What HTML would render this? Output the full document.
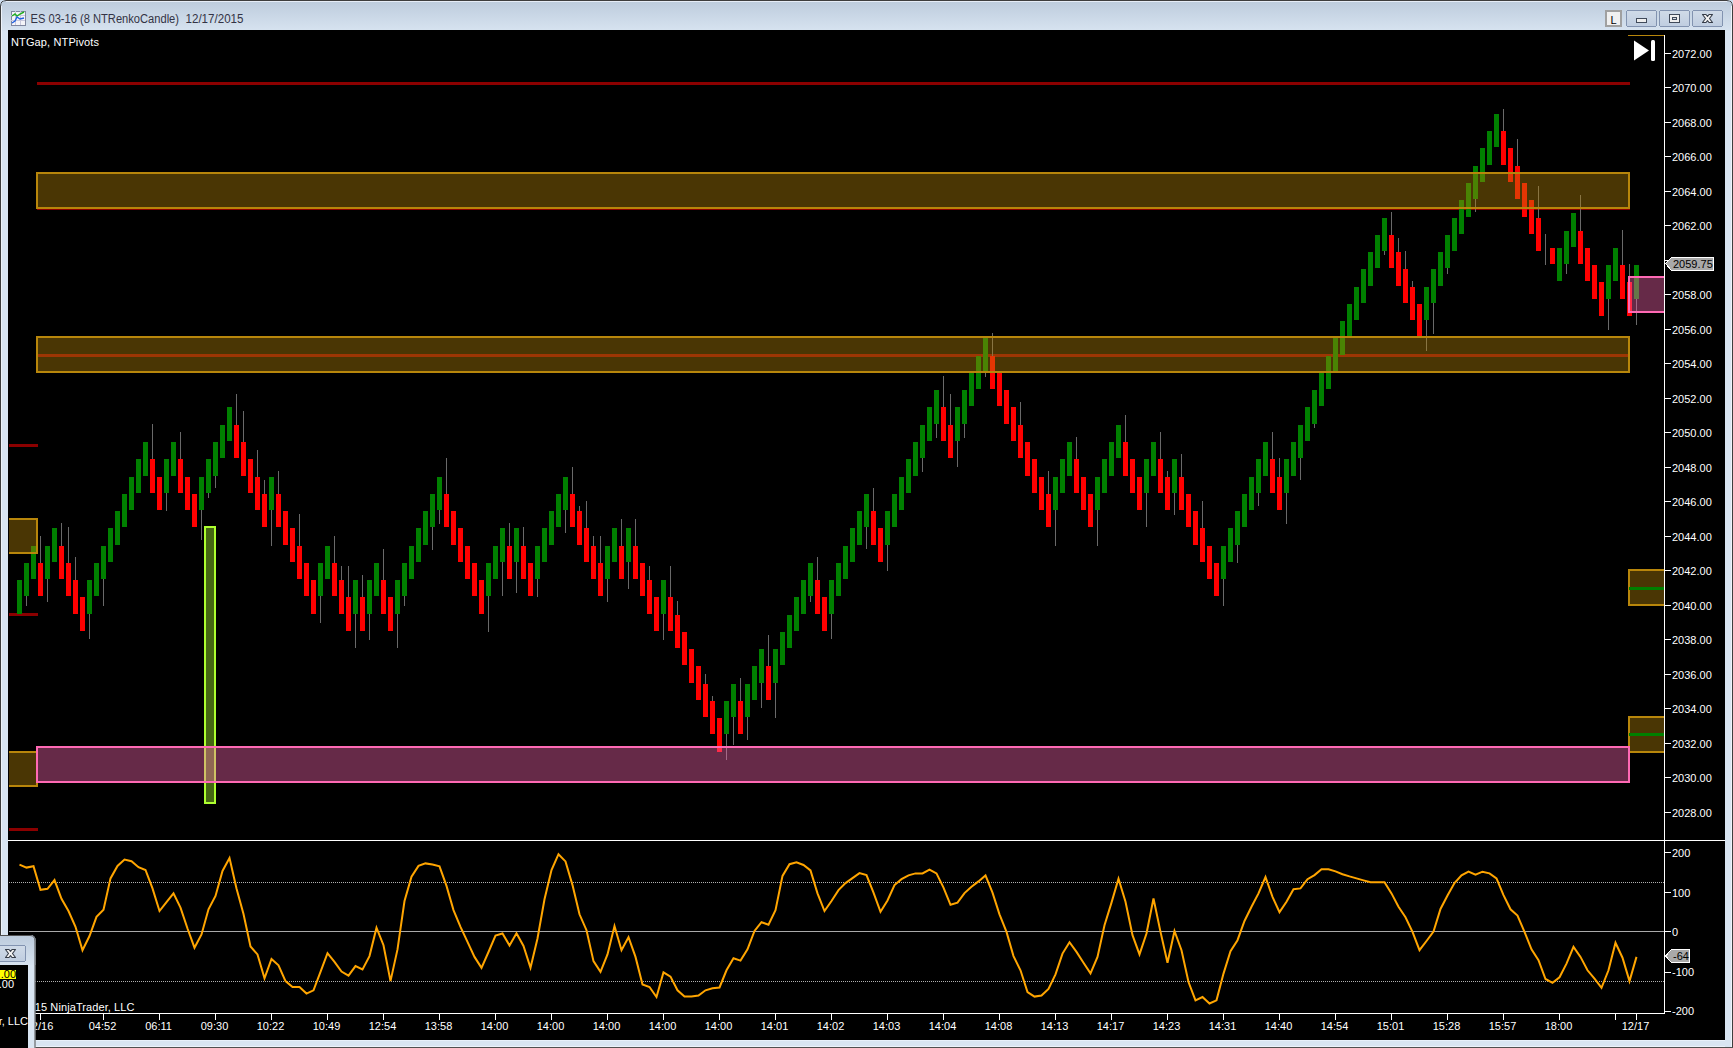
<!DOCTYPE html>
<html><head><meta charset="utf-8">
<style>
html,body{margin:0;padding:0;width:1733px;height:1048px;overflow:hidden;background:#d9e5f2;}
svg{position:absolute;left:0;top:0;}
text{font-family:"Liberation Sans",sans-serif;}
</style></head><body>
<svg width="1733" height="1048" viewBox="0 0 1733 1048" shape-rendering="crispEdges">
<defs>
<linearGradient id="tb" x1="0" y1="0" x2="0" y2="1">
<stop offset="0" stop-color="#bccbdc"/><stop offset="1" stop-color="#d7e3f0"/>
</linearGradient>
<linearGradient id="btn" x1="0" y1="0" x2="0" y2="1">
<stop offset="0" stop-color="#d0dbe8"/><stop offset="1" stop-color="#bfcde0"/>
</linearGradient>
<clipPath id="leftclip"><rect x="9" y="30" width="100" height="810"/></clipPath>
<clipPath id="chartclip"><rect x="8" y="30" width="1656" height="810"/></clipPath>
</defs>
<!-- window frame -->
<rect x="0" y="0" width="1733" height="1048" fill="#d9e5f2"/>
<rect x="0" y="0" width="1733" height="31" fill="url(#tb)"/>
<rect x="0" y="0" width="1733" height="1048" fill="#d9e5f2"/>
<rect x="0" y="0" width="1733" height="31" fill="url(#tb)"/>
<path d="M6,1.5 L1727,1.5" stroke="#e6edf7" stroke-width="1"/>
<path d="M1.5,6 L1.5,1047" stroke="#eef3fa" stroke-width="1"/>
<path d="M1731.5,6 L1731.5,1047" stroke="#eef3fa" stroke-width="1"/>
<path d="M0.5,1048 L0.5,6 Q0.5,0.5 6,0.5 L1727,0.5 Q1732.5,0.5 1732.5,6 L1732.5,1048" fill="none" stroke="#3e3e3e" stroke-width="1" shape-rendering="auto"/>
<path d="M0,0 L6,0 Q0,0 0,6 Z" fill="#cfdff0" shape-rendering="auto"/>
<path d="M1733,0 L1727,0 Q1733,0 1733,6 Z" fill="#cfdff0" shape-rendering="auto"/>
<rect x="0" y="1047" width="1733" height="1" fill="#505050"/>
<rect x="8" y="1040" width="1717" height="1" fill="#e8f0fa"/>
<rect x="8" y="1046" width="1717" height="1" fill="#eef3fb"/>
<!-- title icon -->
<rect x="11" y="11" width="14" height="14" fill="#f4f4f8" stroke="#8088a0" stroke-width="1"/>
<g stroke="#c8c8dc" stroke-width="1"><line x1="11" y1="15.5" x2="25" y2="15.5"/><line x1="11" y1="20.5" x2="25" y2="20.5"/><line x1="15.5" y1="11" x2="15.5" y2="25"/><line x1="20.5" y1="11" x2="20.5" y2="25"/></g>
<polyline points="12,16 15,14 17,16 20,14 24,12" fill="none" stroke="#20b020" stroke-width="1.4" shape-rendering="auto"/>
<polyline points="12,23 15,21 17,17 20,19 24,18" fill="none" stroke="#2060e0" stroke-width="1.4" shape-rendering="auto"/>
<text x="30.5" y="23" font-size="12" textLength="148.5" lengthAdjust="spacingAndGlyphs" fill="#333344">ES 03-16 (8 NTRenkoCandle)</text>
<text x="185.5" y="23" font-size="12" textLength="58" lengthAdjust="spacingAndGlyphs" fill="#333344">12/17/2015</text>
<!-- title buttons -->
<rect x="1606" y="11" width="15" height="15" fill="#f0f0f0" stroke="#a0a0a0" stroke-width="2"/>
<text x="1610.5" y="23.5" font-size="11" fill="#000">L</text>
<rect x="1626.5" y="10.5" width="30" height="16" rx="2" fill="url(#btn)" stroke="#8293b0"/>
<rect x="1659.5" y="10.5" width="30" height="16" rx="2" fill="url(#btn)" stroke="#8293b0"/>
<rect x="1692.5" y="10.5" width="30" height="16" rx="2" fill="url(#btn)" stroke="#8293b0"/>
<rect x="1636.5" y="18.5" width="10" height="4" rx="1" fill="#eeeeee" stroke="#404a5a"/>
<rect x="1669.5" y="14.5" width="10" height="8" rx="1" fill="#eeeeee" stroke="#404a5a"/>
<rect x="1672.5" y="17.5" width="4" height="2" fill="#d8dce4" stroke="#404a5a" stroke-width="1"/>
<path d="M1702.5,14.5 L1706,14.5 L1707.5,16.3 L1709,14.5 L1712.5,14.5 L1709.5,18.5 L1712.5,22.5 L1709,22.5 L1707.5,20.7 L1706,22.5 L1702.5,22.5 L1705.5,18.5 Z" fill="#f2f2f2" stroke="#353c48" stroke-width="1.1" stroke-linejoin="round" shape-rendering="auto"/>

<!-- chart background -->
<rect x="8" y="30" width="1717" height="1010" fill="#000"/>

<!-- pivot lines (under bands) -->
<rect x="37" y="82" width="1593" height="3" fill="#8b0000"/>
<rect x="37" y="207" width="1593" height="3" fill="#8b0000"/>
<rect x="37" y="354" width="1593" height="3" fill="#8b0000"/>
<rect x="9" y="444" width="29" height="3" fill="#8b0000"/>
<rect x="9" y="613" width="29" height="3" fill="#8b0000"/>
<rect x="9" y="828" width="29" height="3" fill="#8b0000"/>

<!-- candles -->
<rect x="17" y="580" width="5" height="34" fill="#008000"/>
<rect x="26" y="596" width="1" height="9.7" fill="#696969"/>
<rect x="24" y="563" width="5" height="33" fill="#008000"/>
<rect x="31" y="546" width="5" height="33" fill="#008000"/>
<rect x="40" y="536.0" width="1" height="27.0" fill="#696969"/>
<rect x="38" y="563" width="5" height="33" fill="#ff0000"/>
<rect x="47" y="579" width="1" height="22.7" fill="#696969"/>
<rect x="45" y="546" width="5" height="33" fill="#008000"/>
<rect x="52" y="528" width="5" height="34" fill="#008000"/>
<rect x="61" y="523.0" width="1" height="23.0" fill="#696969"/>
<rect x="59" y="546" width="5" height="33" fill="#ff0000"/>
<rect x="68" y="527.0" width="1" height="36.0" fill="#696969"/>
<rect x="66" y="563" width="5" height="33" fill="#ff0000"/>
<rect x="75" y="556.8" width="1" height="23.2" fill="#696969"/>
<rect x="73" y="580" width="5" height="34" fill="#ff0000"/>
<rect x="80" y="597" width="5" height="34" fill="#ff0000"/>
<rect x="89" y="614" width="1" height="25.0" fill="#696969"/>
<rect x="87" y="580" width="5" height="34" fill="#008000"/>
<rect x="94" y="563" width="5" height="33" fill="#008000"/>
<rect x="103" y="579" width="1" height="26.7" fill="#696969"/>
<rect x="101" y="546" width="5" height="33" fill="#008000"/>
<rect x="108" y="528" width="5" height="34" fill="#008000"/>
<rect x="115" y="511" width="5" height="34" fill="#008000"/>
<rect x="122" y="494" width="5" height="33" fill="#008000"/>
<rect x="129" y="477" width="5" height="33" fill="#008000"/>
<rect x="136" y="459" width="5" height="34" fill="#008000"/>
<rect x="143" y="442" width="5" height="34" fill="#008000"/>
<rect x="152" y="424.0" width="1" height="35.0" fill="#696969"/>
<rect x="150" y="459" width="5" height="34" fill="#ff0000"/>
<rect x="157" y="477" width="5" height="33" fill="#ff0000"/>
<rect x="166" y="493" width="1" height="18.0" fill="#696969"/>
<rect x="164" y="459" width="5" height="34" fill="#008000"/>
<rect x="171" y="442" width="5" height="34" fill="#008000"/>
<rect x="180" y="432.0" width="1" height="27.0" fill="#696969"/>
<rect x="178" y="459" width="5" height="34" fill="#ff0000"/>
<rect x="185" y="477" width="5" height="33" fill="#ff0000"/>
<rect x="192" y="494" width="5" height="33" fill="#ff0000"/>
<rect x="201" y="510" width="1" height="30.0" fill="#696969"/>
<rect x="199" y="477" width="5" height="33" fill="#008000"/>
<rect x="208" y="493" width="1" height="4.5" fill="#696969"/>
<rect x="206" y="459" width="5" height="34" fill="#008000"/>
<rect x="215" y="476" width="1" height="12.0" fill="#696969"/>
<rect x="213" y="442" width="5" height="34" fill="#008000"/>
<rect x="220" y="425" width="5" height="33" fill="#008000"/>
<rect x="227" y="407" width="5" height="34" fill="#008000"/>
<rect x="236" y="394.0" width="1" height="31.0" fill="#696969"/>
<rect x="234" y="425" width="5" height="33" fill="#ff0000"/>
<rect x="243" y="410.7" width="1" height="31.3" fill="#696969"/>
<rect x="241" y="442" width="5" height="34" fill="#ff0000"/>
<rect x="248" y="459" width="5" height="34" fill="#ff0000"/>
<rect x="257" y="450.0" width="1" height="27.0" fill="#696969"/>
<rect x="255" y="477" width="5" height="33" fill="#ff0000"/>
<rect x="264" y="480.0" width="1" height="14.0" fill="#696969"/>
<rect x="262" y="494" width="5" height="33" fill="#ff0000"/>
<rect x="271" y="510" width="1" height="35.6" fill="#696969"/>
<rect x="269" y="477" width="5" height="33" fill="#008000"/>
<rect x="278" y="470.8" width="1" height="23.2" fill="#696969"/>
<rect x="276" y="494" width="5" height="33" fill="#ff0000"/>
<rect x="283" y="511" width="5" height="34" fill="#ff0000"/>
<rect x="290" y="528" width="5" height="34" fill="#ff0000"/>
<rect x="299" y="514.0" width="1" height="32.0" fill="#696969"/>
<rect x="297" y="546" width="5" height="33" fill="#ff0000"/>
<rect x="304" y="563" width="5" height="33" fill="#ff0000"/>
<rect x="311" y="580" width="5" height="34" fill="#ff0000"/>
<rect x="320" y="596" width="1" height="26.5" fill="#696969"/>
<rect x="318" y="563" width="5" height="33" fill="#008000"/>
<rect x="325" y="546" width="5" height="33" fill="#008000"/>
<rect x="334" y="535.7" width="1" height="27.3" fill="#696969"/>
<rect x="332" y="563" width="5" height="33" fill="#ff0000"/>
<rect x="341" y="565.6" width="1" height="14.4" fill="#696969"/>
<rect x="339" y="580" width="5" height="34" fill="#ff0000"/>
<rect x="348" y="566.0" width="1" height="31.0" fill="#696969"/>
<rect x="346" y="597" width="5" height="34" fill="#ff0000"/>
<rect x="355" y="614" width="1" height="34.4" fill="#696969"/>
<rect x="353" y="580" width="5" height="34" fill="#008000"/>
<rect x="362" y="575.0" width="1" height="22.0" fill="#696969"/>
<rect x="360" y="597" width="5" height="34" fill="#ff0000"/>
<rect x="369" y="614" width="1" height="25.5" fill="#696969"/>
<rect x="367" y="580" width="5" height="34" fill="#008000"/>
<rect x="374" y="563" width="5" height="33" fill="#008000"/>
<rect x="383" y="549.0" width="1" height="31.0" fill="#696969"/>
<rect x="381" y="580" width="5" height="34" fill="#ff0000"/>
<rect x="388" y="597" width="5" height="34" fill="#ff0000"/>
<rect x="397" y="614" width="1" height="34.4" fill="#696969"/>
<rect x="395" y="580" width="5" height="34" fill="#008000"/>
<rect x="404" y="596" width="1" height="9.6" fill="#696969"/>
<rect x="402" y="563" width="5" height="33" fill="#008000"/>
<rect x="409" y="546" width="5" height="33" fill="#008000"/>
<rect x="416" y="528" width="5" height="34" fill="#008000"/>
<rect x="423" y="511" width="5" height="34" fill="#008000"/>
<rect x="432" y="527" width="1" height="22.5" fill="#696969"/>
<rect x="430" y="494" width="5" height="33" fill="#008000"/>
<rect x="439" y="510" width="1" height="13.6" fill="#696969"/>
<rect x="437" y="477" width="5" height="33" fill="#008000"/>
<rect x="446" y="458.2" width="1" height="35.8" fill="#696969"/>
<rect x="444" y="494" width="5" height="33" fill="#ff0000"/>
<rect x="451" y="511" width="5" height="34" fill="#ff0000"/>
<rect x="458" y="528" width="5" height="34" fill="#ff0000"/>
<rect x="465" y="546" width="5" height="33" fill="#ff0000"/>
<rect x="472" y="563" width="5" height="33" fill="#ff0000"/>
<rect x="479" y="580" width="5" height="34" fill="#ff0000"/>
<rect x="488" y="596" width="1" height="35.5" fill="#696969"/>
<rect x="486" y="563" width="5" height="33" fill="#008000"/>
<rect x="493" y="546" width="5" height="33" fill="#008000"/>
<rect x="502" y="562" width="1" height="34.3" fill="#696969"/>
<rect x="500" y="528" width="5" height="34" fill="#008000"/>
<rect x="509" y="522.8" width="1" height="23.2" fill="#696969"/>
<rect x="507" y="546" width="5" height="33" fill="#ff0000"/>
<rect x="516" y="562" width="1" height="30.5" fill="#696969"/>
<rect x="514" y="528" width="5" height="34" fill="#008000"/>
<rect x="523" y="526.8" width="1" height="19.2" fill="#696969"/>
<rect x="521" y="546" width="5" height="33" fill="#ff0000"/>
<rect x="528" y="563" width="5" height="33" fill="#ff0000"/>
<rect x="537" y="579" width="1" height="18.0" fill="#696969"/>
<rect x="535" y="546" width="5" height="33" fill="#008000"/>
<rect x="542" y="528" width="5" height="34" fill="#008000"/>
<rect x="549" y="511" width="5" height="34" fill="#008000"/>
<rect x="556" y="494" width="5" height="33" fill="#008000"/>
<rect x="565" y="510" width="1" height="23.0" fill="#696969"/>
<rect x="563" y="477" width="5" height="33" fill="#008000"/>
<rect x="572" y="466.7" width="1" height="27.3" fill="#696969"/>
<rect x="570" y="494" width="5" height="33" fill="#ff0000"/>
<rect x="579" y="506.0" width="1" height="5.0" fill="#696969"/>
<rect x="577" y="511" width="5" height="34" fill="#ff0000"/>
<rect x="586" y="501.0" width="1" height="27.0" fill="#696969"/>
<rect x="584" y="528" width="5" height="34" fill="#ff0000"/>
<rect x="593" y="535.6" width="1" height="10.4" fill="#696969"/>
<rect x="591" y="546" width="5" height="33" fill="#ff0000"/>
<rect x="600" y="535.6" width="1" height="27.4" fill="#696969"/>
<rect x="598" y="563" width="5" height="33" fill="#ff0000"/>
<rect x="607" y="579" width="1" height="22.6" fill="#696969"/>
<rect x="605" y="546" width="5" height="33" fill="#008000"/>
<rect x="612" y="528" width="5" height="34" fill="#008000"/>
<rect x="621" y="518.8" width="1" height="27.2" fill="#696969"/>
<rect x="619" y="546" width="5" height="33" fill="#ff0000"/>
<rect x="628" y="562" width="1" height="27.0" fill="#696969"/>
<rect x="626" y="528" width="5" height="34" fill="#008000"/>
<rect x="635" y="518.8" width="1" height="27.2" fill="#696969"/>
<rect x="633" y="546" width="5" height="33" fill="#ff0000"/>
<rect x="640" y="563" width="5" height="33" fill="#ff0000"/>
<rect x="649" y="566.0" width="1" height="14.0" fill="#696969"/>
<rect x="647" y="580" width="5" height="34" fill="#ff0000"/>
<rect x="654" y="597" width="5" height="34" fill="#ff0000"/>
<rect x="663" y="614" width="1" height="25.8" fill="#696969"/>
<rect x="661" y="580" width="5" height="34" fill="#008000"/>
<rect x="670" y="566.0" width="1" height="31.0" fill="#696969"/>
<rect x="668" y="597" width="5" height="34" fill="#ff0000"/>
<rect x="677" y="601.0" width="1" height="14.0" fill="#696969"/>
<rect x="675" y="615" width="5" height="33" fill="#ff0000"/>
<rect x="682" y="632" width="5" height="33" fill="#ff0000"/>
<rect x="689" y="649" width="5" height="34" fill="#ff0000"/>
<rect x="696" y="666" width="5" height="34" fill="#ff0000"/>
<rect x="705" y="673.6" width="1" height="10.4" fill="#696969"/>
<rect x="703" y="684" width="5" height="33" fill="#ff0000"/>
<rect x="712" y="695.8" width="1" height="5.2" fill="#696969"/>
<rect x="710" y="701" width="5" height="33" fill="#ff0000"/>
<rect x="717" y="718" width="5" height="34" fill="#ff0000"/>
<rect x="726" y="734" width="1" height="26.4" fill="#696969"/>
<rect x="724" y="701" width="5" height="33" fill="#008000"/>
<rect x="733" y="717" width="1" height="28.0" fill="#696969"/>
<rect x="731" y="684" width="5" height="33" fill="#008000"/>
<rect x="740" y="677.6" width="1" height="23.4" fill="#696969"/>
<rect x="738" y="701" width="5" height="33" fill="#ff0000"/>
<rect x="747" y="717" width="1" height="22.6" fill="#696969"/>
<rect x="745" y="684" width="5" height="33" fill="#008000"/>
<rect x="752" y="666" width="5" height="34" fill="#008000"/>
<rect x="761" y="683" width="1" height="25.3" fill="#696969"/>
<rect x="759" y="649" width="5" height="34" fill="#008000"/>
<rect x="768" y="634.9" width="1" height="31.1" fill="#696969"/>
<rect x="766" y="666" width="5" height="34" fill="#ff0000"/>
<rect x="775" y="683" width="1" height="34.7" fill="#696969"/>
<rect x="773" y="649" width="5" height="34" fill="#008000"/>
<rect x="780" y="632" width="5" height="33" fill="#008000"/>
<rect x="787" y="615" width="5" height="33" fill="#008000"/>
<rect x="794" y="597" width="5" height="34" fill="#008000"/>
<rect x="801" y="580" width="5" height="34" fill="#008000"/>
<rect x="810" y="596" width="1" height="5.5" fill="#696969"/>
<rect x="808" y="563" width="5" height="33" fill="#008000"/>
<rect x="817" y="556.9" width="1" height="23.1" fill="#696969"/>
<rect x="815" y="580" width="5" height="34" fill="#ff0000"/>
<rect x="822" y="597" width="5" height="34" fill="#ff0000"/>
<rect x="831" y="614" width="1" height="25.4" fill="#696969"/>
<rect x="829" y="580" width="5" height="34" fill="#008000"/>
<rect x="836" y="563" width="5" height="33" fill="#008000"/>
<rect x="843" y="546" width="5" height="33" fill="#008000"/>
<rect x="850" y="528" width="5" height="34" fill="#008000"/>
<rect x="857" y="511" width="5" height="34" fill="#008000"/>
<rect x="866" y="527" width="1" height="22.0" fill="#696969"/>
<rect x="864" y="494" width="5" height="33" fill="#008000"/>
<rect x="873" y="487.7" width="1" height="23.3" fill="#696969"/>
<rect x="871" y="511" width="5" height="34" fill="#ff0000"/>
<rect x="878" y="528" width="5" height="34" fill="#ff0000"/>
<rect x="887" y="545" width="1" height="25.5" fill="#696969"/>
<rect x="885" y="511" width="5" height="34" fill="#008000"/>
<rect x="892" y="494" width="5" height="33" fill="#008000"/>
<rect x="899" y="477" width="5" height="33" fill="#008000"/>
<rect x="906" y="459" width="5" height="34" fill="#008000"/>
<rect x="913" y="442" width="5" height="34" fill="#008000"/>
<rect x="922" y="458" width="1" height="13.7" fill="#696969"/>
<rect x="920" y="425" width="5" height="33" fill="#008000"/>
<rect x="927" y="407" width="5" height="34" fill="#008000"/>
<rect x="936" y="424" width="1" height="13.5" fill="#696969"/>
<rect x="934" y="390" width="5" height="34" fill="#008000"/>
<rect x="943" y="376.1" width="1" height="30.9" fill="#696969"/>
<rect x="941" y="407" width="5" height="34" fill="#ff0000"/>
<rect x="950" y="394.3" width="1" height="30.7" fill="#696969"/>
<rect x="948" y="425" width="5" height="33" fill="#ff0000"/>
<rect x="957" y="441" width="1" height="26.4" fill="#696969"/>
<rect x="955" y="407" width="5" height="34" fill="#008000"/>
<rect x="964" y="424" width="1" height="13.5" fill="#696969"/>
<rect x="962" y="390" width="5" height="34" fill="#008000"/>
<rect x="969" y="373" width="5" height="33" fill="#008000"/>
<rect x="976" y="356" width="5" height="33" fill="#008000"/>
<rect x="985" y="372" width="1" height="4.6" fill="#696969"/>
<rect x="983" y="338" width="5" height="34" fill="#008000"/>
<rect x="992" y="332.8" width="1" height="23.2" fill="#696969"/>
<rect x="990" y="356" width="5" height="33" fill="#ff0000"/>
<rect x="997" y="373" width="5" height="33" fill="#ff0000"/>
<rect x="1004" y="390" width="5" height="34" fill="#ff0000"/>
<rect x="1011" y="407" width="5" height="34" fill="#ff0000"/>
<rect x="1020" y="402.2" width="1" height="22.8" fill="#696969"/>
<rect x="1018" y="425" width="5" height="33" fill="#ff0000"/>
<rect x="1025" y="442" width="5" height="34" fill="#ff0000"/>
<rect x="1032" y="459" width="5" height="34" fill="#ff0000"/>
<rect x="1039" y="477" width="5" height="33" fill="#ff0000"/>
<rect x="1048" y="470.8" width="1" height="23.2" fill="#696969"/>
<rect x="1046" y="494" width="5" height="33" fill="#ff0000"/>
<rect x="1055" y="510" width="1" height="35.6" fill="#696969"/>
<rect x="1053" y="477" width="5" height="33" fill="#008000"/>
<rect x="1060" y="459" width="5" height="34" fill="#008000"/>
<rect x="1067" y="442" width="5" height="34" fill="#008000"/>
<rect x="1076" y="436.9" width="1" height="22.1" fill="#696969"/>
<rect x="1074" y="459" width="5" height="34" fill="#ff0000"/>
<rect x="1081" y="477" width="5" height="33" fill="#ff0000"/>
<rect x="1088" y="494" width="5" height="33" fill="#ff0000"/>
<rect x="1097" y="510" width="1" height="35.6" fill="#696969"/>
<rect x="1095" y="477" width="5" height="33" fill="#008000"/>
<rect x="1102" y="459" width="5" height="34" fill="#008000"/>
<rect x="1109" y="442" width="5" height="34" fill="#008000"/>
<rect x="1116" y="425" width="5" height="33" fill="#008000"/>
<rect x="1125" y="414.7" width="1" height="27.3" fill="#696969"/>
<rect x="1123" y="442" width="5" height="34" fill="#ff0000"/>
<rect x="1130" y="459" width="5" height="34" fill="#ff0000"/>
<rect x="1137" y="477" width="5" height="33" fill="#ff0000"/>
<rect x="1146" y="493" width="1" height="34.4" fill="#696969"/>
<rect x="1144" y="459" width="5" height="34" fill="#008000"/>
<rect x="1151" y="442" width="5" height="34" fill="#008000"/>
<rect x="1160" y="432.0" width="1" height="27.0" fill="#696969"/>
<rect x="1158" y="459" width="5" height="34" fill="#ff0000"/>
<rect x="1167" y="470.8" width="1" height="6.2" fill="#696969"/>
<rect x="1165" y="477" width="5" height="33" fill="#ff0000"/>
<rect x="1174" y="493" width="1" height="21.9" fill="#696969"/>
<rect x="1172" y="459" width="5" height="34" fill="#008000"/>
<rect x="1181" y="454.3" width="1" height="22.7" fill="#696969"/>
<rect x="1179" y="477" width="5" height="33" fill="#ff0000"/>
<rect x="1186" y="494" width="5" height="33" fill="#ff0000"/>
<rect x="1193" y="511" width="5" height="34" fill="#ff0000"/>
<rect x="1202" y="501.1" width="1" height="26.9" fill="#696969"/>
<rect x="1200" y="528" width="5" height="34" fill="#ff0000"/>
<rect x="1207" y="546" width="5" height="33" fill="#ff0000"/>
<rect x="1214" y="563" width="5" height="33" fill="#ff0000"/>
<rect x="1223" y="579" width="1" height="26.8" fill="#696969"/>
<rect x="1221" y="546" width="5" height="33" fill="#008000"/>
<rect x="1228" y="528" width="5" height="34" fill="#008000"/>
<rect x="1237" y="545" width="1" height="17.5" fill="#696969"/>
<rect x="1235" y="511" width="5" height="34" fill="#008000"/>
<rect x="1242" y="494" width="5" height="33" fill="#008000"/>
<rect x="1249" y="477" width="5" height="33" fill="#008000"/>
<rect x="1258" y="493" width="1" height="13.4" fill="#696969"/>
<rect x="1256" y="459" width="5" height="34" fill="#008000"/>
<rect x="1263" y="442" width="5" height="34" fill="#008000"/>
<rect x="1272" y="432.2" width="1" height="26.8" fill="#696969"/>
<rect x="1270" y="459" width="5" height="34" fill="#ff0000"/>
<rect x="1279" y="458.4" width="1" height="18.6" fill="#696969"/>
<rect x="1277" y="477" width="5" height="33" fill="#ff0000"/>
<rect x="1286" y="493" width="1" height="30.8" fill="#696969"/>
<rect x="1284" y="459" width="5" height="34" fill="#008000"/>
<rect x="1291" y="442" width="5" height="34" fill="#008000"/>
<rect x="1300" y="458" width="1" height="22.3" fill="#696969"/>
<rect x="1298" y="425" width="5" height="33" fill="#008000"/>
<rect x="1305" y="407" width="5" height="34" fill="#008000"/>
<rect x="1314" y="424" width="1" height="4.2" fill="#696969"/>
<rect x="1312" y="390" width="5" height="34" fill="#008000"/>
<rect x="1319" y="373" width="5" height="33" fill="#008000"/>
<rect x="1326" y="356" width="5" height="33" fill="#008000"/>
<rect x="1333" y="338" width="5" height="34" fill="#008000"/>
<rect x="1340" y="321" width="5" height="34" fill="#008000"/>
<rect x="1347" y="304" width="5" height="33" fill="#008000"/>
<rect x="1354" y="287" width="5" height="33" fill="#008000"/>
<rect x="1361" y="269" width="5" height="34" fill="#008000"/>
<rect x="1368" y="252" width="5" height="34" fill="#008000"/>
<rect x="1375" y="235" width="5" height="33" fill="#008000"/>
<rect x="1384" y="251" width="1" height="3.9" fill="#696969"/>
<rect x="1382" y="218" width="5" height="33" fill="#008000"/>
<rect x="1391" y="212.2" width="1" height="22.8" fill="#696969"/>
<rect x="1389" y="235" width="5" height="33" fill="#ff0000"/>
<rect x="1398" y="238.4" width="1" height="13.6" fill="#696969"/>
<rect x="1396" y="252" width="5" height="34" fill="#ff0000"/>
<rect x="1405" y="251.0" width="1" height="18.0" fill="#696969"/>
<rect x="1403" y="269" width="5" height="34" fill="#ff0000"/>
<rect x="1412" y="281.0" width="1" height="6.0" fill="#696969"/>
<rect x="1410" y="287" width="5" height="33" fill="#ff0000"/>
<rect x="1417" y="304" width="5" height="33" fill="#ff0000"/>
<rect x="1426" y="320" width="1" height="31.0" fill="#696969"/>
<rect x="1424" y="287" width="5" height="33" fill="#008000"/>
<rect x="1433" y="303" width="1" height="30.7" fill="#696969"/>
<rect x="1431" y="269" width="5" height="34" fill="#008000"/>
<rect x="1438" y="252" width="5" height="34" fill="#008000"/>
<rect x="1447" y="268" width="1" height="5.6" fill="#696969"/>
<rect x="1445" y="235" width="5" height="33" fill="#008000"/>
<rect x="1452" y="218" width="5" height="33" fill="#008000"/>
<rect x="1459" y="200" width="5" height="34" fill="#008000"/>
<rect x="1466" y="183" width="5" height="34" fill="#008000"/>
<rect x="1475" y="199" width="1" height="13.2" fill="#696969"/>
<rect x="1473" y="166" width="5" height="33" fill="#008000"/>
<rect x="1480" y="148" width="5" height="34" fill="#008000"/>
<rect x="1487" y="131" width="5" height="34" fill="#008000"/>
<rect x="1494" y="114" width="5" height="33" fill="#008000"/>
<rect x="1503" y="109.3" width="1" height="21.7" fill="#696969"/>
<rect x="1501" y="131" width="5" height="34" fill="#ff0000"/>
<rect x="1508" y="148" width="5" height="34" fill="#ff0000"/>
<rect x="1517" y="139.3" width="1" height="26.7" fill="#696969"/>
<rect x="1515" y="166" width="5" height="33" fill="#ff0000"/>
<rect x="1522" y="183" width="5" height="34" fill="#ff0000"/>
<rect x="1529" y="200" width="5" height="34" fill="#ff0000"/>
<rect x="1538" y="185.8" width="1" height="32.2" fill="#696969"/>
<rect x="1536" y="218" width="5" height="33" fill="#ff0000"/>
<rect x="1550" y="248" width="5" height="16" fill="#ff0000"/>
<rect x="1557" y="248" width="5" height="33" fill="#008000"/>
<rect x="1566" y="264" width="1" height="9.7" fill="#696969"/>
<rect x="1564" y="231" width="5" height="33" fill="#008000"/>
<rect x="1571" y="213" width="5" height="34" fill="#008000"/>
<rect x="1580" y="195.3" width="1" height="35.7" fill="#696969"/>
<rect x="1578" y="231" width="5" height="33" fill="#ff0000"/>
<rect x="1585" y="248" width="5" height="33" fill="#ff0000"/>
<rect x="1592" y="265" width="5" height="34" fill="#ff0000"/>
<rect x="1599" y="282" width="5" height="34" fill="#ff0000"/>
<rect x="1608" y="299" width="1" height="30.5" fill="#696969"/>
<rect x="1606" y="265" width="5" height="34" fill="#008000"/>
<rect x="1613" y="248" width="5" height="33" fill="#008000"/>
<rect x="1622" y="230.2" width="1" height="34.8" fill="#696969"/>
<rect x="1620" y="265" width="5" height="34" fill="#ff0000"/>
<rect x="1629" y="264.0" width="1" height="18.0" fill="#696969"/>
<rect x="1627" y="282" width="5" height="34" fill="#ff0000"/>
<rect x="1636" y="299" width="1" height="25.5" fill="#696969"/>
<rect x="1634" y="265" width="5" height="34" fill="#008000"/>
<rect x="1545" y="234" width="1" height="31" fill="#696969"/>

<!-- gap boxes -->
<g clip-path="url(#chartclip)">
<rect x="37" y="173" width="1592" height="35" fill="rgba(184,134,11,0.4)" stroke="#b8860b" stroke-width="2"/>
<rect x="37" y="337" width="1592" height="35" fill="rgba(184,134,11,0.4)" stroke="#b8860b" stroke-width="2"/>
<g clip-path="url(#leftclip)"><rect x="-10" y="519" width="47" height="34" fill="rgba(184,134,11,0.4)" stroke="#b8860b" stroke-width="2"/>
<rect x="-10" y="752" width="47" height="34" fill="rgba(184,134,11,0.4)" stroke="#b8860b" stroke-width="2"/></g>
<rect x="1629" y="570" width="60" height="35" fill="rgba(184,134,11,0.4)" stroke="#b8860b" stroke-width="2"/>
<rect x="1629" y="717" width="60" height="35" fill="rgba(184,134,11,0.4)" stroke="#b8860b" stroke-width="2"/>
<rect x="1629" y="587" width="35" height="3" fill="#008000"/>
<rect x="1629" y="733" width="35" height="3" fill="#008000"/>
<rect x="205" y="527" width="10" height="276" fill="rgba(173,255,47,0.4)" stroke="#adff2f" stroke-width="2"/>
<rect x="37" y="747" width="1592" height="35" fill="rgba(255,105,180,0.4)" stroke="#ff69b4" stroke-width="2"/>
<rect x="1629" y="277" width="60" height="35" fill="rgba(255,105,180,0.4)" stroke="#ff69b4" stroke-width="2"/>
</g>

<!-- axes -->
<rect x="1628" y="35" width="37" height="1" fill="#b8860b"/>
<rect x="1664" y="35" width="1" height="978" fill="#ffffff"/>
<rect x="8" y="840" width="1717" height="1" fill="#ffffff"/>
<rect x="8" y="1013" width="1657" height="1" fill="#ffffff"/>
<!-- play icon -->
<path d="M1634,40.5 L1649,50.5 L1634,60.5 Z" fill="#ffffff" shape-rendering="auto"/>
<rect x="1651" y="40" width="4" height="21" rx="1.5" fill="#ffffff" shape-rendering="auto"/>

<g font-size="11" fill="#ffffff">
<rect x="1664" y="53" width="7" height="1" fill="#fff"/>
<text x="1672" y="58">2072.00</text>
<rect x="1664" y="87" width="7" height="1" fill="#fff"/>
<text x="1672" y="92">2070.00</text>
<rect x="1664" y="122" width="7" height="1" fill="#fff"/>
<text x="1672" y="127">2068.00</text>
<rect x="1664" y="156" width="7" height="1" fill="#fff"/>
<text x="1672" y="161">2066.00</text>
<rect x="1664" y="191" width="7" height="1" fill="#fff"/>
<text x="1672" y="196">2064.00</text>
<rect x="1664" y="225" width="7" height="1" fill="#fff"/>
<text x="1672" y="230">2062.00</text>
<rect x="1664" y="260" width="7" height="1" fill="#fff"/>
<text x="1672" y="265">2060.00</text>
<rect x="1664" y="294" width="7" height="1" fill="#fff"/>
<text x="1672" y="299">2058.00</text>
<rect x="1664" y="329" width="7" height="1" fill="#fff"/>
<text x="1672" y="334">2056.00</text>
<rect x="1664" y="363" width="7" height="1" fill="#fff"/>
<text x="1672" y="368">2054.00</text>
<rect x="1664" y="398" width="7" height="1" fill="#fff"/>
<text x="1672" y="403">2052.00</text>
<rect x="1664" y="432" width="7" height="1" fill="#fff"/>
<text x="1672" y="437">2050.00</text>
<rect x="1664" y="467" width="7" height="1" fill="#fff"/>
<text x="1672" y="472">2048.00</text>
<rect x="1664" y="501" width="7" height="1" fill="#fff"/>
<text x="1672" y="506">2046.00</text>
<rect x="1664" y="536" width="7" height="1" fill="#fff"/>
<text x="1672" y="541">2044.00</text>
<rect x="1664" y="570" width="7" height="1" fill="#fff"/>
<text x="1672" y="575">2042.00</text>
<rect x="1664" y="605" width="7" height="1" fill="#fff"/>
<text x="1672" y="610">2040.00</text>
<rect x="1664" y="639" width="7" height="1" fill="#fff"/>
<text x="1672" y="644">2038.00</text>
<rect x="1664" y="674" width="7" height="1" fill="#fff"/>
<text x="1672" y="679">2036.00</text>
<rect x="1664" y="708" width="7" height="1" fill="#fff"/>
<text x="1672" y="713">2034.00</text>
<rect x="1664" y="743" width="7" height="1" fill="#fff"/>
<text x="1672" y="748">2032.00</text>
<rect x="1664" y="777" width="7" height="1" fill="#fff"/>
<text x="1672" y="782">2030.00</text>
<rect x="1664" y="812" width="7" height="1" fill="#fff"/>
<text x="1672" y="817">2028.00</text>
<rect x="1664" y="852.0" width="7" height="1" fill="#fff"/>
<text x="1672" y="856.5">200</text>
<rect x="1664" y="891.9" width="7" height="1" fill="#fff"/>
<text x="1672" y="897.0">100</text>
<rect x="1664" y="931.0" width="7" height="1" fill="#fff"/>
<text x="1672" y="935.5">0</text>
<rect x="1664" y="971.5" width="7" height="1" fill="#fff"/>
<text x="1672" y="976.0">-100</text>
<rect x="1664" y="1011.0" width="7" height="1" fill="#fff"/>
<text x="1672" y="1015.0">-200</text>
<rect x="40.0" y="1013" width="1" height="7" fill="#fff"/>
<text x="39.5" y="1030" text-anchor="middle">12/16</text>
<rect x="103.0" y="1013" width="1" height="7" fill="#fff"/>
<text x="102.5" y="1030" text-anchor="middle">04:52</text>
<rect x="159.0" y="1013" width="1" height="7" fill="#fff"/>
<text x="158.5" y="1030" text-anchor="middle">06:11</text>
<rect x="215.0" y="1013" width="1" height="7" fill="#fff"/>
<text x="214.5" y="1030" text-anchor="middle">09:30</text>
<rect x="271.0" y="1013" width="1" height="7" fill="#fff"/>
<text x="270.5" y="1030" text-anchor="middle">10:22</text>
<rect x="327.0" y="1013" width="1" height="7" fill="#fff"/>
<text x="326.5" y="1030" text-anchor="middle">10:49</text>
<rect x="383.0" y="1013" width="1" height="7" fill="#fff"/>
<text x="382.5" y="1030" text-anchor="middle">12:54</text>
<rect x="439.0" y="1013" width="1" height="7" fill="#fff"/>
<text x="438.5" y="1030" text-anchor="middle">13:58</text>
<rect x="495.0" y="1013" width="1" height="7" fill="#fff"/>
<text x="494.5" y="1030" text-anchor="middle">14:00</text>
<rect x="551.0" y="1013" width="1" height="7" fill="#fff"/>
<text x="550.5" y="1030" text-anchor="middle">14:00</text>
<rect x="607.0" y="1013" width="1" height="7" fill="#fff"/>
<text x="606.5" y="1030" text-anchor="middle">14:00</text>
<rect x="663.0" y="1013" width="1" height="7" fill="#fff"/>
<text x="662.5" y="1030" text-anchor="middle">14:00</text>
<rect x="719.0" y="1013" width="1" height="7" fill="#fff"/>
<text x="718.5" y="1030" text-anchor="middle">14:00</text>
<rect x="775.0" y="1013" width="1" height="7" fill="#fff"/>
<text x="774.5" y="1030" text-anchor="middle">14:01</text>
<rect x="831.0" y="1013" width="1" height="7" fill="#fff"/>
<text x="830.5" y="1030" text-anchor="middle">14:02</text>
<rect x="887.0" y="1013" width="1" height="7" fill="#fff"/>
<text x="886.5" y="1030" text-anchor="middle">14:03</text>
<rect x="943.0" y="1013" width="1" height="7" fill="#fff"/>
<text x="942.5" y="1030" text-anchor="middle">14:04</text>
<rect x="999.0" y="1013" width="1" height="7" fill="#fff"/>
<text x="998.5" y="1030" text-anchor="middle">14:08</text>
<rect x="1055.0" y="1013" width="1" height="7" fill="#fff"/>
<text x="1054.5" y="1030" text-anchor="middle">14:13</text>
<rect x="1111.0" y="1013" width="1" height="7" fill="#fff"/>
<text x="1110.5" y="1030" text-anchor="middle">14:17</text>
<rect x="1167.0" y="1013" width="1" height="7" fill="#fff"/>
<text x="1166.5" y="1030" text-anchor="middle">14:23</text>
<rect x="1223.0" y="1013" width="1" height="7" fill="#fff"/>
<text x="1222.5" y="1030" text-anchor="middle">14:31</text>
<rect x="1279.0" y="1013" width="1" height="7" fill="#fff"/>
<text x="1278.5" y="1030" text-anchor="middle">14:40</text>
<rect x="1335.0" y="1013" width="1" height="7" fill="#fff"/>
<text x="1334.5" y="1030" text-anchor="middle">14:54</text>
<rect x="1391.0" y="1013" width="1" height="7" fill="#fff"/>
<text x="1390.5" y="1030" text-anchor="middle">15:01</text>
<rect x="1447.0" y="1013" width="1" height="7" fill="#fff"/>
<text x="1446.5" y="1030" text-anchor="middle">15:28</text>
<rect x="1503.0" y="1013" width="1" height="7" fill="#fff"/>
<text x="1502.5" y="1030" text-anchor="middle">15:57</text>
<rect x="1559.0" y="1013" width="1" height="7" fill="#fff"/>
<text x="1558.5" y="1030" text-anchor="middle">18:00</text>
<rect x="1615.0" y="1013" width="1" height="7" fill="#fff"/>
<rect x="1636.0" y="1013" width="1" height="7" fill="#fff"/>
<text x="1635.5" y="1030" text-anchor="middle">12/17</text>
<text x="11" y="45.5" textLength="88" lengthAdjust="spacing">NTGap, NTPivots</text>
<text x="11" y="1011" textLength="123.5" lengthAdjust="spacing">© 2015 NinjaTrader, LLC</text>
</g>

<!-- price marker -->
<path d="M1665.5,263.5 L1671.5,257.5 L1713.5,257.5 L1713.5,270.5 L1671.5,270.5 Z" fill="#a9a9a9" stroke="#ffffff" stroke-width="1"/>
<text x="1673" y="268" font-size="11" fill="#000">2059.75</text>

<!-- oscillator -->
<line x1="9" y1="882.5" x2="1664" y2="882.5" stroke="#b0b0b0" stroke-width="1" stroke-dasharray="1,1"/>
<line x1="9" y1="981.5" x2="1664" y2="981.5" stroke="#b0b0b0" stroke-width="1" stroke-dasharray="1,1"/>
<rect x="9" y="931" width="1655" height="1" fill="#a9a9a9"/>
<polyline points="19.5,864.7 26.5,867.6 33.5,866.2 40.5,889.8 47.5,888.8 54.5,880.1 61.5,898.8 68.5,911.0 75.5,926.8 82.5,950.2 89.5,936.0 96.5,916.8 103.5,909.8 110.5,878.4 117.5,865.9 124.5,859.5 131.5,861.2 138.5,867.2 145.5,870.0 152.5,888.4 159.5,911.0 166.5,902.1 173.5,893.4 180.5,907.6 187.5,928.5 194.5,947.7 201.5,934.4 208.5,909.3 215.5,896.0 222.5,870.9 229.5,858.0 236.5,888.4 243.5,914.0 250.5,946.5 257.5,954.4 264.5,978.3 271.5,958.9 278.5,965.3 285.5,981.1 292.5,987.0 299.5,987.0 306.5,993.6 313.5,990.3 320.5,971.9 327.5,953.2 334.5,961.9 341.5,971.6 348.5,975.6 355.5,966.1 362.5,969.4 369.5,956.1 376.5,927.7 383.5,945.2 390.5,981.1 397.5,949.4 404.5,901.0 411.5,876.7 418.5,865.9 425.5,863.4 432.5,864.5 439.5,866.4 446.5,885.9 453.5,910.1 460.5,926.8 467.5,941.9 474.5,956.9 481.5,967.8 488.5,952.0 495.5,935.5 502.5,933.5 509.5,945.5 516.5,933.2 523.5,946.0 530.5,967.8 537.5,938.5 544.5,899.3 551.5,870.1 558.5,854.2 565.5,861.4 572.5,885.1 579.5,914.3 586.5,930.2 593.5,961.1 600.5,971.9 607.5,954.4 614.5,926.0 621.5,950.2 628.5,937.2 635.5,956.9 642.5,984.5 649.5,987.0 656.5,997.0 663.5,972.3 670.5,976.6 677.5,990.3 684.5,996.5 691.5,996.6 698.5,995.6 705.5,990.3 712.5,988.3 719.5,987.5 726.5,970.3 733.5,958.2 740.5,960.6 747.5,949.4 754.5,931.0 761.5,922.2 768.5,924.8 775.5,910.1 782.5,875.9 789.5,864.2 796.5,862.2 803.5,865.0 810.5,870.4 817.5,893.4 824.5,911.0 831.5,901.0 838.5,890.1 845.5,883.1 852.5,878.1 859.5,873.1 866.5,875.1 873.5,892.6 880.5,911.8 887.5,900.5 894.5,885.1 901.5,879.2 908.5,875.4 915.5,873.4 922.5,873.4 929.5,869.6 936.5,873.4 943.5,887.6 950.5,904.8 957.5,902.6 964.5,893.1 971.5,886.8 978.5,881.4 985.5,875.4 992.5,892.6 999.5,914.3 1006.5,931.9 1013.5,956.1 1020.5,970.3 1027.5,992.0 1034.5,996.6 1041.5,995.6 1048.5,989.0 1055.5,974.4 1062.5,953.6 1069.5,942.2 1076.5,951.9 1083.5,962.7 1090.5,973.3 1097.5,956.9 1104.5,925.2 1111.5,902.6 1118.5,878.7 1125.5,901.8 1132.5,935.2 1139.5,954.4 1146.5,933.5 1153.5,898.5 1160.5,931.9 1167.5,962.7 1174.5,931.0 1181.5,950.2 1188.5,982.0 1195.5,1000.3 1202.5,997.0 1209.5,1003.5 1216.5,1000.3 1223.5,973.6 1230.5,951.1 1237.5,940.2 1244.5,921.0 1251.5,906.8 1258.5,893.4 1265.5,877.1 1272.5,896.8 1279.5,912.1 1286.5,901.8 1293.5,889.3 1300.5,888.4 1307.5,879.2 1314.5,875.1 1321.5,869.2 1328.5,869.2 1335.5,871.4 1342.5,874.2 1349.5,876.4 1356.5,878.4 1363.5,880.4 1370.5,882.3 1377.5,882.3 1384.5,882.3 1391.5,893.4 1398.5,906.8 1405.5,917.2 1412.5,931.9 1419.5,950.2 1426.5,941.0 1433.5,931.5 1440.5,909.0 1447.5,895.5 1454.5,883.1 1461.5,875.4 1468.5,871.7 1475.5,874.7 1482.5,871.7 1489.5,873.4 1496.5,878.4 1503.5,895.1 1510.5,909.3 1517.5,915.5 1524.5,931.9 1531.5,949.4 1538.5,960.2 1545.5,979.0 1552.5,982.8 1559.5,977.3 1566.5,963.6 1573.5,946.9 1580.5,956.9 1587.5,970.3 1594.5,978.6 1601.5,987.8 1608.5,970.3 1615.5,942.8 1622.5,957.7 1629.5,981.1 1636.5,956.9" fill="none" stroke="#ffa500" stroke-width="2" stroke-linejoin="miter" shape-rendering="auto"/>
<path d="M1665.5,956 L1671.5,949.5 L1689.5,949.5 L1689.5,962.5 L1671.5,962.5 Z" fill="#a9a9a9" stroke="#ffffff" stroke-width="1"/>
<text x="1673" y="960" font-size="11" fill="#000">-64</text>

<!-- small overlapping window bottom-left -->
<path d="M0,935 L30,935 Q35.5,935 35.5,940.5 L35.5,1048 L0,1048 Z" fill="#d9e5f2" shape-rendering="auto"/>
<path d="M0,935 L30,935 Q35.5,935 35.5,940.5 L35.5,965 L0,965 Z" fill="url(#tb)" shape-rendering="auto"/>
<path d="M0,935.5 L30,935.5 Q35,935.5 35,941 L35,1048" fill="none" stroke="#505050" stroke-width="1" shape-rendering="auto"/>
<rect x="-5.5" y="945.5" width="31" height="16" rx="2" fill="url(#btn)" stroke="#8293b0"/>
<path d="M5.5,949.5 L9,949.5 L10.5,951.3 L12,949.5 L15.5,949.5 L12.5,953.5 L15.5,957.5 L12,957.5 L10.5,955.7 L9,957.5 L5.5,957.5 L8.5,953.5 Z" fill="#f2f2f2" stroke="#353c48" stroke-width="1.1" stroke-linejoin="round" shape-rendering="auto"/>
<rect x="0" y="965" width="28" height="83" fill="#000"/>
<rect x="0" y="970" width="16" height="9" fill="#ffff00"/>
<text x="16" y="978" font-size="11" fill="#000" text-anchor="end">.00</text>
<text x="14" y="988" font-size="11" fill="#fff" text-anchor="end">.00</text>
<text x="28" y="1025" font-size="11" fill="#fff" text-anchor="end">r, LLC</text>
</svg>
</body></html>
